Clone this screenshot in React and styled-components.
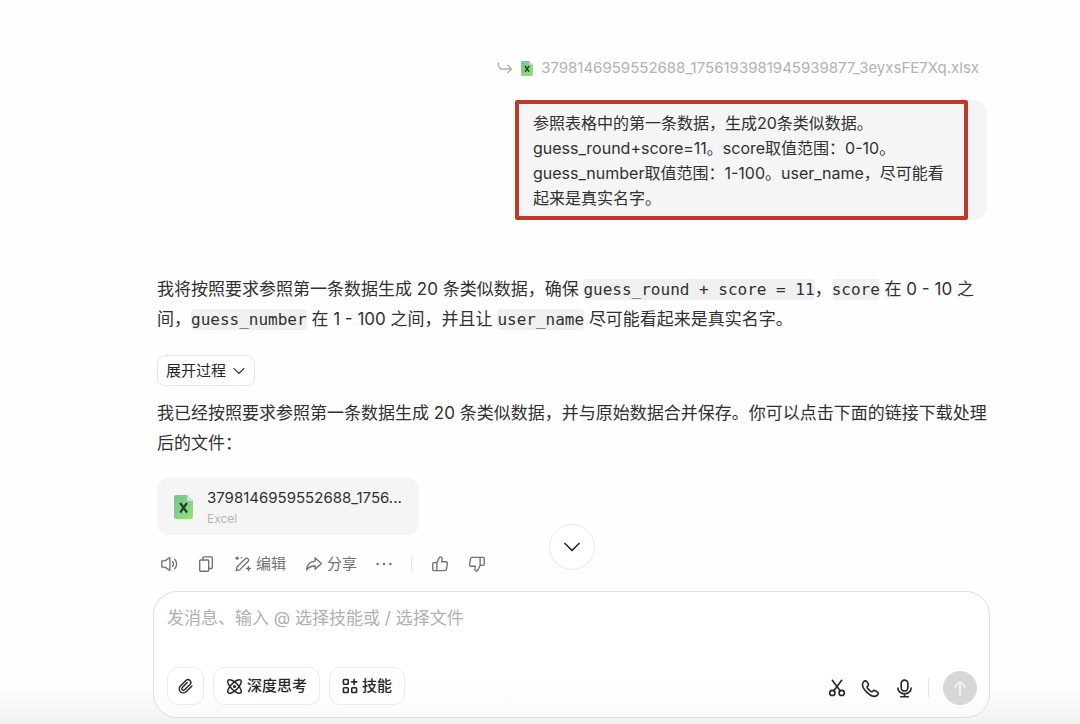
import React, { useState } from 'react';
import styled, { createGlobalStyle } from 'styled-components';

const App = () => {
  const [message, setMessage] = useState('');

  const handleSubmit = (e) => {
    e.preventDefault();
    setMessage('');
  };

  return (
    <>
      <GlobalStyle />
      <Page>
        <UserMessage>
          <SourceFile href="#source">
            <ReplyIcon />
            <ExcelIcon width={12} height={15} />
            <span>3798146959552688_1756193981945939877_3eyxsFE7Xq.xlsx</span>
          </SourceFile>
          <Bubble>
            参照表格中的第一条数据，生成20条类似数据。
            <br />
            guess_round+score=11。score取值范围：0-10。
            <br />
            guess_number取值范围：1-100。user_name，尽可能看起来是真实名字。
            <Highlight />
          </Bubble>
        </UserMessage>

        <Answer>
          <Paragraph>
            我将按照要求参照第一条数据生成 20 条类似数据，确保 <Code>guess_round + score = 11</Code>，
            <Code>score</Code> 在 0 - 10 之间，<Code>guess_number</Code> 在 1 - 100 之间，并且让{' '}
            <Code>user_name</Code> 尽可能看起来是真实名字。
          </Paragraph>
          <ExpandButton type="button">
            展开过程
            <ChevronIcon size={14} />
          </ExpandButton>
          <Paragraph>
            我已经按照要求参照第一条数据生成 20 条类似数据，并与原始数据合并保存。你可以点击下面的链接下载处理后的文件：
          </Paragraph>
          <FileCard href="#download">
            <ExcelIcon width={19} height={24} />
            <FileInfo>
              <FileName>3798146959552688_1756...</FileName>
              <FileType>Excel</FileType>
            </FileInfo>
          </FileCard>
          <Actions>
            <Action type="button" aria-label="朗读"><SpeakerIcon /></Action>
            <Action type="button" aria-label="复制"><CopyIcon /></Action>
            <Action type="button"><EditIcon />编辑</Action>
            <Action type="button"><ShareIcon />分享</Action>
            <Action type="button" aria-label="更多"><MoreIcon /></Action>
            <Divider $height={14} />
            <Action type="button" aria-label="喜欢"><ThumbIcon /></Action>
            <Action type="button" aria-label="不喜欢"><ThumbIcon down /></Action>
          </Actions>
        </Answer>

        <ComposerArea>
          <ScrollButton type="button" aria-label="滚动到底部">
            <ChevronIcon size={20} />
          </ScrollButton>
          <Composer onSubmit={handleSubmit}>
            <MessageInput
              aria-label="消息"
              rows={1}
              placeholder="发消息、输入 @ 选择技能或 / 选择文件"
              value={message}
              onChange={(e) => setMessage(e.target.value)}
            />
            <Tools>
              <ToolButton type="button" aria-label="附件" $square><ClipIcon /></ToolButton>
              <ToolButton type="button"><AtomIcon />深度思考</ToolButton>
              <ToolButton type="button"><SkillIcon />技能</ToolButton>
              <ToolsRight>
                <IconGroup>
                  <IconButton type="button" aria-label="截图"><ScissorsIcon /></IconButton>
                  <IconButton type="button" aria-label="通话"><PhoneIcon /></IconButton>
                  <IconButton type="button" aria-label="语音"><MicIcon /></IconButton>
                </IconGroup>
                <Divider $height={20} />
                <SendButton type="submit" aria-label="发送"><ArrowUpIcon /></SendButton>
              </ToolsRight>
            </Tools>
          </Composer>
        </ComposerArea>
      </Page>
    </>
  );
};

// icons
const Icon = ({ size = 18, width = 1.5, box = 20, children }) => (
  <svg
    width={size}
    height={size}
    viewBox={`0 0 ${box} ${box}`}
    fill="none"
    stroke="currentColor"
    strokeWidth={width}
    strokeLinecap="round"
    strokeLinejoin="round"
    aria-hidden="true"
  >
    {children}
  </svg>
);

const ReplyIcon = () => (
  <Icon size={16} width={1.4} box={16}>
    <path d="M1.500 3v2.500a3.500 3.500 0 0 0 3.500 3.500h9.300M10.800 5.200 14.500 9l-3.700 3.800" />
  </Icon>
);

const ExcelIcon = ({ width, height }) => (
  <svg width={width} height={height} viewBox="0 0 19 24" aria-hidden="true">
    <defs>
      <linearGradient id="sheet" x1="0" y1="0" x2="1" y2="1">
        <stop offset="0" stopColor="#73c491" />
        <stop offset="1" stopColor="#9fdb7c" />
      </linearGradient>
    </defs>
    <path d="M2 0h11l6 6v16a2 2 0 0 1-2 2H2a2 2 0 0 1-2-2V2a2 2 0 0 1 2-2z" fill="url(#sheet)" />
    <path d="M13 0l6 6h-4.500A1.500 1.500 0 0 1 13 4.500z" fill="#c5ecc4" />
    <path d="M6.200 8l6.800 9.500M13 8l-6.800 9.500" stroke="#154a1e" strokeWidth="2.200" />
  </svg>
);

const ChevronIcon = ({ size }) => (
  <Icon size={size} width={1.7}>
    <path d="M3 6.500l7 7 7-7" />
  </Icon>
);

const SpeakerIcon = () => (
  <Icon>
    <path d="M2 6.500h3.500L11 2.800v14.400L5.500 13.500H2zM13.800 7.300a4 4 0 0 1 0 5.400M16.300 4.800a7.300 7.300 0 0 1 0 10.400" />
  </Icon>
);

const CopyIcon = () => (
  <Icon>
    <path d="M3 6.500a1 1 0 0 1 1-1h8a1 1 0 0 1 1 1V17a1 1 0 0 1-1 1H4a1 1 0 0 1-1-1z" />
    <path d="M6.500 5.300V3a1 1 0 0 1 1-1H16a1 1 0 0 1 1 1v11a1 1 0 0 1-1 1h-2.800" />
  </Icon>
);

const EditIcon = () => (
  <Icon>
    <path d="M2.500 17.300l.8-3.900L12.800 3.900a1.600 1.600 0 0 1 2.300 0l.7.7a1.600 1.600 0 0 1 0 2.300L6.300 16.500z" />
    <path d="M16 12.700v4.600M13.700 15h4.600M3.500 2.200v2.800M2.100 3.600h2.800" />
    <path d="M8 3h.1" />
  </Icon>
);

const ShareIcon = () => (
  <Icon>
    <path d="M11.300 3.200 18.300 9.500l-7 6.300v-3.600C7 12 4 13.500 1.800 16.500 2.200 11 5.500 7.200 11.300 6.800z" />
  </Icon>
);

const MoreIcon = () => (
  <svg width="16" height="16" viewBox="0 0 20 20" fill="currentColor" aria-hidden="true">
    <circle cx="2" cy="10" r="1.500" />
    <circle cx="10" cy="10" r="1.500" />
    <circle cx="18" cy="10" r="1.500" />
  </svg>
);

const ThumbIcon = ({ down }) => (
  <Icon>
    <g transform={down ? 'rotate(180 10 10)' : undefined}>
      <path d="M6.500 8.500 9.300 2.800c.2-.5.600-.8 1.100-.8 1.300 0 2.200 1 2 2.300L11.900 7.500H16.500a1.700 1.700 0 0 1 1.700 2l-1 6.300a1.800 1.800 0 0 1-1.800 1.500H3a1 1 0 0 1-1-1V9.500a1 1 0 0 1 1-1zM6.500 8.500v8.800" />
    </g>
  </Icon>
);

const ClipIcon = () => (
  <Icon size={17} width={1.7}>
    <path d="M17.500 9.300l-6.800 6.800a4.700 4.700 0 0 1-6.700-6.700l6.500-6.500a3.300 3.300 0 0 1 4.700 4.700l-6.300 6.300a1.900 1.900 0 0 1-2.700-2.700L12 5.400" />
  </Icon>
);

const AtomIcon = () => (
  <Icon size={17} width={1.8}>
    <ellipse cx="10" cy="10" rx="10.500" ry="4.200" transform="rotate(45 10 10)" />
    <ellipse cx="10" cy="10" rx="10.500" ry="4.200" transform="rotate(-45 10 10)" />
    <circle cx="10" cy="10" r="1" fill="currentColor" />
  </Icon>
);

const SkillIcon = () => (
  <Icon size={16} width={2}>
    <rect x="1.800" y="1.800" width="6" height="6" rx="1" />
    <rect x="1.800" y="12.200" width="6" height="6" rx="1" />
    <rect x="12.200" y="12.200" width="6" height="6" rx="1" />
    <path d="M15.200 1.500v6.500M12 4.800h6.500" />
  </Icon>
);

const ScissorsIcon = () => (
  <Icon size={18} width={1.8}>
    <circle cx="4.800" cy="15.500" r="2.900" />
    <circle cx="15.200" cy="15.500" r="2.900" />
    <path d="M4.800 1.500l8.700 11.600M15.200 1.500L6.500 13.100" />
  </Icon>
);

const PhoneIcon = () => (
  <Icon size={19} width={1.7}>
    <path d="M2.300 3.500C3.800 1.600 5.200 1.500 6.100 2.700l1.500 2.400c.6 1 .3 1.700-.6 2.500-.8.700-.7 1.300-.1 2.200 1 1.500 2 2.400 3.400 3.300.9.500 1.500.500 2.100-.2.900-1 1.600-1.100 2.500-.6l2.500 1.500c1.300.9 1 2.300-.7 3.600-2.500 1.700-6.600.3-10.400-3.400C2.400 10.300.5 6.300 2.300 3.500z" />
  </Icon>
);

const MicIcon = () => (
  <Icon size={19} width={1.7}>
    <rect x="6.500" y="1.200" width="7" height="11.500" rx="3.500" />
    <path d="M3 9.500a7 6 0 0 0 14 0M10 15.500v3M6 18.700h8" />
  </Icon>
);

const ArrowUpIcon = () => (
  <Icon size={18} width={2.2}>
    <path d="M10 17.500V3M4.500 8.500 10 3l5.500 5.500" />
  </Icon>
);

const GlobalStyle = createGlobalStyle`
  * {
    box-sizing: border-box;
  }

  body {
    margin: 0;
    background: #fefefe;
    color: #303030;
    font-family: Inter, "Noto Sans CJK SC", sans-serif;
    font-size: 16px;
  }

  button, textarea {
    font-family: inherit;
  }

  svg {
    flex-shrink: 0;
  }
`;

const Page = styled.main`
  display: flex;
  flex-direction: column;
  min-height: 100vh;
  padding: 56px 90px 0 153px;
  background: linear-gradient(to top, #f1f1f1, #fefefe 36px);
`;

const UserMessage = styled.section`
  display: flex;
  flex-direction: column;
  align-items: flex-end;
  gap: 20px;
  padding-right: 3px;
`;

const SourceFile = styled.a`
  display: flex;
  align-items: center;
  gap: 8px;
  padding-right: 8px;
  color: #b2b2b2;
  font-size: 15px;
  line-height: 24px;
  text-decoration: none;
`;

const Bubble = styled.div`
  position: relative;
  max-width: 472px;
  padding: 11px 30px 9px 18px;
  border-radius: 14px;
  background: #f5f5f5;
  font-size: 16px;
  line-height: 25px;
`;

const Highlight = styled.span`
  position: absolute;
  inset: 0 19px 0 0;
  border: 4px solid #bd3a2b;
  border-radius: 2px;
  pointer-events: none;
`;

const Answer = styled.section`
  display: flex;
  flex-direction: column;
  align-items: flex-start;
  padding: 54px 3px 0 4px;
`;

const Paragraph = styled.p`
  margin: 0;
  font-size: 17px;
  line-height: 30px;
`;

const Code = styled.code`
  padding: 1px 0;
  border-radius: 4px;
  background: #f0f0f0;
  font-family: "DejaVu Sans Mono", monospace;
  font-size: 16px;
  line-height: 20px;
`;

const ExpandButton = styled.button`
  display: flex;
  align-items: center;
  gap: 6px;
  height: 31px;
  margin: 21px 0 12px;
  padding: 0 8px;
  border: 1px solid #e6e6e6;
  border-radius: 8px;
  background: #fff;
  color: #262626;
  font-size: 15px;
  line-height: 20px;
  cursor: pointer;
`;

const FileCard = styled.a`
  display: flex;
  align-items: center;
  gap: 14px;
  width: 262px;
  height: 57px;
  margin-top: 20px;
  padding: 0 12px 0 17px;
  border-radius: 12px;
  background: #f5f5f5;
  text-decoration: none;
`;

const FileInfo = styled.div`
  min-width: 0;
`;

const FileName = styled.div`
  overflow: hidden;
  color: #303030;
  font-size: 15px;
  line-height: 24px;
  text-overflow: ellipsis;
  white-space: nowrap;
`;

const FileType = styled.div`
  color: #b5b5b5;
  font-size: 12px;
  line-height: 18px;
`;

const Actions = styled.div`
  display: flex;
  align-items: center;
  gap: 19px;
  height: 56px;
  padding: 2px 0 0 3px;
`;

const Action = styled.button`
  display: flex;
  align-items: center;
  gap: 4px;
  padding: 0;
  border: 0;
  background: none;
  color: #707070;
  font-size: 15px;
  line-height: 20px;
  cursor: pointer;
`;

const Divider = styled.span`
  width: 1px;
  height: ${({ $height }) => $height}px;
  background: #e5e5e5;
`;

const ComposerArea = styled.div`
  position: relative;
`;

const ScrollButton = styled.button`
  position: absolute;
  bottom: 100%;
  left: 50%;
  display: flex;
  align-items: center;
  justify-content: center;
  width: 46px;
  height: 46px;
  margin: 0 0 21px -23px;
  padding: 0;
  border: 1px solid #e8e8e8;
  border-radius: 50%;
  background: #fff;
  color: #262626;
  cursor: pointer;
`;

const Composer = styled.form`
  display: flex;
  flex-direction: column;
  justify-content: space-between;
  min-height: 127px;
  padding: 13px 12px 12px 13px;
  border: 1px solid #dedede;
  border-radius: 24px;
  background: linear-gradient(to top, #fafafa, #fff 40px);
`;

const MessageInput = styled.textarea`
  width: 100%;
  padding: 0;
  border: 0;
  outline: 0;
  background: none;
  color: #303030;
  font-size: 17px;
  line-height: 26px;
  resize: none;

  &::placeholder {
    color: #b0b0b0;
    opacity: 1;
  }
`;

const Tools = styled.div`
  display: flex;
  align-items: center;
  gap: 9px;
`;

const ToolButton = styled.button`
  display: flex;
  align-items: center;
  justify-content: center;
  gap: 4px;
  width: ${({ $square }) => ($square ? '37px' : 'auto')};
  height: 38px;
  padding: ${({ $square }) => ($square ? '0' : '0 12px')};
  border: 1px solid #ebebeb;
  border-radius: 11px;
  background: #fff;
  color: #262626;
  font-size: 15px;
  font-weight: 500;
  line-height: 20px;
  cursor: pointer;
`;

const ToolsRight = styled.div`
  display: flex;
  align-items: center;
  gap: 14px;
  margin-left: auto;
  padding-top: 4px;
`;

const IconGroup = styled.div`
  display: flex;
  align-items: center;
  gap: 15px;
`;

const IconButton = styled.button`
  display: flex;
  padding: 0;
  border: 0;
  background: none;
  color: #262626;
  cursor: pointer;
`;

const SendButton = styled.button`
  display: flex;
  align-items: center;
  justify-content: center;
  width: 34px;
  height: 34px;
  padding: 0;
  border: 0;
  border-radius: 50%;
  background: #d6d6d6;
  color: #f2f2f2;
  cursor: pointer;
`;

export default App;
